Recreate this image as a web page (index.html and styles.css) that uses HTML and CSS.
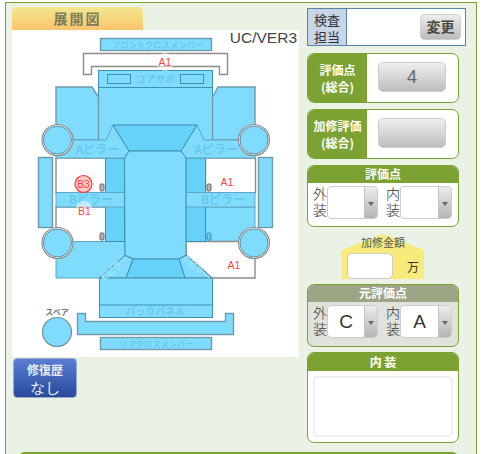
FILE: index.html
```html
<!DOCTYPE html>
<html>
<head>
  <meta charset="utf-8">
  <title>展開図</title>
  <link rel="stylesheet" href="styles.css">
</head>
<body>
  <div class="frame">
    <div class="columns">
      <div class="left">
        <div class="tab">展開図</div>
        <div class="diagram">
          <div class="version">UC/VER3</div>
          <svg class="car" width="287" height="327" viewBox="12 30 287 327">
            <!-- front -->
            <rect class="part edge" x="100.5" y="38.5" width="111" height="12"/>
            <polygon class="empty" points="83.5,53.5 227.5,53.5 227.5,74.5 219.5,74.5 219.5,66.5 91.5,66.5 91.5,74.5 83.5,74.5"/>
            <rect class="part" x="98.5" y="70.5" width="114" height="70"/>
            <line class="seam" x1="98.5" y1="87.5" x2="212.5" y2="87.5"/>
            <rect class="part" x="107.5" y="74.5" width="23" height="9"/>
            <rect class="part" x="180.5" y="74.5" width="23" height="9"/>

            <!-- fenders -->
            <polygon class="part edge" points="56,87 92,87 98.5,97 98.5,140 56,140"/>
            <polygon class="part edge" points="212.5,97 218,87 255,87 255,140 212.5,140"/>

            <!-- left side -->
            <rect class="empty" x="56" y="158" width="50" height="35"/>
            <rect class="empty" x="56" y="207" width="50" height="35"/>
            <polygon class="part flat" points="56,241.5 125,241.5 125,278 56,278"/>
            <rect class="dark" x="105.5" y="158" width="19" height="83.5"/>
            <polygon class="part flat" points="56,140 106,140 113,125 129,151 124.5,158 56,158"/>
            <rect class="part flat" x="56" y="192.5" width="68.5" height="14.5"/>

            <!-- right side -->
            <rect class="empty" x="205.5" y="158" width="50" height="35"/>
            <rect class="part flat" x="205.5" y="207" width="49.5" height="34.5"/>
            <polygon class="empty" points="186,241.5 255,241.5 255,278 212,278 186,255"/>
            <rect class="dark" x="186" y="158" width="19.5" height="83.5"/>
            <polygon class="part flat" points="255,140 204,140 197,125 181,151 186,158 255,158"/>
            <rect class="part flat" x="186" y="192.5" width="69" height="14.5"/>

            <!-- cabin -->
            <polygon class="dark" points="113,125 197,125 181,151 129,151"/>
            <polygon class="part" points="129,151 181,151 186,158 186,255 179,259 133,259 125,255 124.5,158"/>
            <polygon class="part" points="99,278 125,255.5 133,259 126,278"/>
            <polygon class="part" points="186,255.5 212,278 185,278 179,259"/>
            <polygon class="dark" points="133,259 179,259 185,278 126,278"/>

            <!-- rear -->
            <rect class="part" x="99.5" y="278" width="113" height="39.5"/>
            <line class="seam" x1="99.5" y1="305" x2="212.5" y2="305"/>
            <polygon class="part edge" points="77.5,313.5 85.5,313.5 85.5,321.5 225.5,321.5 225.5,313.5 233.5,313.5 233.5,334.5 77.5,334.5"/>
            <rect class="part edge" x="100.5" y="337.5" width="111" height="12"/>

            <!-- skirts and handles -->
            <rect class="part edge" x="38.5" y="157.5" width="14" height="70"/>
            <rect class="part edge" x="258.5" y="157.5" width="14" height="70"/>
            <rect class="handle" x="100" y="184" width="4" height="7" rx="1"/>
            <rect class="handle" x="100" y="233" width="4" height="7" rx="1"/>
            <rect class="handle" x="207" y="184" width="4" height="7" rx="1"/>
            <rect class="handle blue" x="207" y="233" width="4" height="7" rx="1"/>

            <!-- tyres -->
            <circle class="ring" cx="57.5" cy="140" r="15.5"/><circle class="tyre" cx="57.5" cy="140" r="14"/>
            <circle class="ring" cx="254" cy="140" r="15.5"/><circle class="tyre" cx="254" cy="140" r="14"/>
            <circle class="ring" cx="57.5" cy="243" r="15.5"/><circle class="tyre" cx="57.5" cy="243" r="14"/>
            <circle class="ring" cx="254" cy="243" r="15.5"/><circle class="tyre" cx="254" cy="243" r="14"/>
            <circle class="tyre spare" cx="57" cy="332" r="14.5"/>

            <!-- part names -->
            <text class="name tiny" x="157.5" y="47.5">フロントクロスメンバー</text>
            <text class="name mid" x="155.5" y="83">コアサポ</text>
            <text class="name" x="97.5" y="154">Aピラー</text>
            <text class="name" x="216" y="154">Aピラー</text>
            <text class="name" x="91" y="204">Bピラー</text>
            <text class="name" x="223" y="204">Bピラー</text>
            <text class="name pale" x="115" y="271" transform="rotate(-40 115 268)">Cピラー</text>
            <text class="name pale" x="197" y="271" transform="rotate(40 197 268)">Cピラー</text>
            <text class="name mid" x="155.5" y="315">バックパネル</text>
            <text class="name tiny" x="156.5" y="346.5">リアクロスメンバー</text>
            <text class="spare-name" x="57" y="315">スペア</text>

            <!-- damage marks -->
            <circle class="halo" cx="165" cy="62" r="9"/>
            <circle class="halo" cx="84" cy="209" r="8"/>
            <circle class="mark" cx="83.5" cy="184" r="8.5"/>
            <text class="code" x="165" y="66">A1</text>
            <text class="code" x="83.5" y="188">B3</text>
            <text class="code" x="84.5" y="215">B1</text>
            <text class="code" x="227" y="186">A1</text>
            <text class="code" x="234" y="269">A1</text>
          </svg>
        </div>
        <div class="repair">修復歴<span>なし</span></div>
      </div>

      <div class="right">
        <div class="inspector">
          <div class="inspector-label">検査<br>担当</div>
          <div class="inspector-body"><div class="change">変更</div></div>
        </div>

        <div class="score">
          <div class="score-label">評価点<br>(総合)</div>
          <div class="score-body"><div class="score-btn">4</div></div>
        </div>
        <div class="score second">
          <div class="score-label">加修評価<br>(総合)</div>
          <div class="score-body"><div class="score-btn"></div></div>
        </div>

        <div class="box third">
          <div class="box-head">評価点</div>
          <div class="selects">
            <div class="side">外装</div>
            <div class="sel"><div class="sel-val"></div><div class="sel-arrow"></div></div>
            <div class="side inner">内装</div>
            <div class="sel"><div class="sel-val"></div><div class="sel-arrow"></div></div>
          </div>
        </div>

        <div class="amount">
          <div class="amount-title">加修金額</div>
          <div class="amount-row"><div class="amount-input"></div><span>万</span></div>
        </div>

        <div class="box old">
          <div class="box-head">元評価点</div>
          <div class="selects">
            <div class="side">外装</div>
            <div class="sel"><div class="sel-val">C</div><div class="sel-arrow"></div></div>
            <div class="side inner">内装</div>
            <div class="sel"><div class="sel-val">A</div><div class="sel-arrow"></div></div>
          </div>
        </div>

        <div class="box interior">
          <div class="box-head">内 装</div>
          <div class="memo"></div>
        </div>
      </div>
    </div>
    <div class="bottom"></div>
  </div>
</body>
</html>
```

FILE: styles.css
```css
html, body {
  margin: 0;
  padding: 0;
  height: 454px;
  overflow: hidden;
  background: #fff;
  font-family: "Noto Sans CJK JP", "Liberation Sans", sans-serif;
  color: #333;
}

.frame {
  box-sizing: border-box;
  margin: 2px 0 0 5px;
  width: 472px;
  height: 452px;
  padding: 4px 0 0 6px;
  background: #e9f2e4;
  border: 1px solid #7ba232;
  border-bottom: none;
  overflow: hidden;
}

.columns {
  display: flex;
  align-items: flex-start;
  gap: 8px;
  height: 436px;
}

.left {
  width: 287px;
  flex: none;
}

.tab {
  box-sizing: border-box;
  width: 131px;
  height: 23px;
  border-radius: 5px 5px 0 0;
  background: linear-gradient(#f2e78e, #fbc56d);
  color: #7d7d5c;
  font-size: 14px;
  font-weight: 700;
  line-height: 23px;
  text-align: center;
  letter-spacing: 2px;
}

.diagram {
  position: relative;
  height: 327px;
  background: #fff;
}

.car {
  display: block;
}

.version {
  position: absolute;
  top: -2px;
  right: 2px;
  font-family: "Liberation Sans", sans-serif;
  font-size: 15.5px;
  line-height: 20px;
  color: #444;
}

.part {
  fill: #7fdcff;
  stroke: #3f8fae;
  stroke-width: 1;
}

.part.edge {
  stroke: #6e9aac;
  stroke-width: 1.4;
}

.part.flat {
  stroke: #5ea6c2;
}

.dark {
  fill: #66d2f9;
  stroke: #3f8fae;
  stroke-width: 1;
}

.empty {
  fill: #fff;
  stroke: #8c8c8c;
  stroke-width: 1.4;
}

.seam {
  stroke: #3f8fae;
  stroke-width: 1;
}

.handle {
  fill: #b5b5b5;
  stroke: #666;
  stroke-width: 1;
}

.handle.blue {
  fill: #66c8ec;
  stroke: #3f8fae;
}

.ring {
  fill: #fff;
  stroke: #8c8c8c;
  stroke-width: 1.2;
}

.tyre {
  fill: #7fdcff;
  stroke: #5f8ea0;
  stroke-width: 1;
}

.spare {
  stroke: #70909c;
  stroke-width: 1.2;
}

.name {
  fill: #6cc8ec;
  font-size: 12px;
  font-weight: 700;
  text-anchor: middle;
}

.name.mid {
  font-size: 10px;
}

.name.tiny {
  font-size: 8.3px;
}

.name.pale {
  fill: #a6e3f7;
  font-size: 9px;
}

.spare-name {
  fill: #777;
  font-size: 8px;
  font-weight: 700;
  text-anchor: middle;
}

.halo {
  fill: #fff;
  opacity: 0.55;
}

.mark {
  fill: #ffc9c9;
  stroke: #f33;
  stroke-width: 1.2;
}

.code {
  fill: #f44;
  font-family: "Liberation Sans", sans-serif;
  font-size: 10.5px;
  text-anchor: middle;
}

.repair {
  box-sizing: border-box;
  width: 64px;
  height: 40px;
  margin: 1px 0 0 1px;
  padding-top: 3px;
  border-radius: 4px;
  background: linear-gradient(#5a7fd2, #28499c);
  border: 1px solid #9aa9c4;
  color: #e4ecfa;
  font-size: 12px;
  font-weight: 700;
  line-height: 16px;
  text-align: center;
}

.repair span {
  display: block;
  font-size: 15px;
  font-weight: 400;
  line-height: 19px;
}

.right {
  width: 152px;
  flex: none;
  margin-top: 1px;
}

.inspector {
  box-sizing: border-box;
  display: flex;
  width: 159px;
  height: 38px;
  border: 1px solid #5d82a8;
  background: #fff;
}

.inspector-label {
  width: 38px;
  border-right: 1px solid #5d82a8;
  background: #c7d5e8;
  font-size: 13px;
  line-height: 17px;
  padding-top: 2px;
  text-align: center;
}

.inspector-body {
  flex: 1;
  display: flex;
  justify-content: flex-end;
  align-items: center;
  padding-right: 4px;
}

.change {
  width: 41px;
  height: 26px;
  border-radius: 5px;
  background: linear-gradient(#efefef, #b9b9b9);
  box-shadow: inset 0 0 0 1px #d0d0d0;
  color: #4a4a3c;
  font-size: 14px;
  font-weight: 700;
  line-height: 25px;
  text-align: center;
}

.score {
  box-sizing: border-box;
  display: flex;
  height: 50px;
  margin-top: 7px;
  background: #fff;
  border: 1px solid #7ba232;
  border-radius: 7px;
  overflow: hidden;
}

.score.second {
  margin-top: 6px;
}

.score-label {
  width: 59px;
  padding-top: 7px;
  background: #7ba232;
  color: #fff;
  font-size: 12px;
  font-weight: 700;
  line-height: 17px;
  text-align: center;
}

.score-body {
  flex: 1;
  padding: 8px 0 0 11px;
}

.score-btn {
  box-sizing: border-box;
  width: 68px;
  height: 30px;
  border: 1px solid #ccc;
  border-radius: 5px;
  background: linear-gradient(#efefef, #bdbdbd);
  color: #666;
  font-family: "Liberation Sans", sans-serif;
  font-size: 18px;
  line-height: 28px;
  text-align: center;
}

.box {
  box-sizing: border-box;
  background: #fff;
  border: 1px solid #7ba232;
  border-radius: 7px;
  overflow: hidden;
}

.box-head {
  height: 17px;
  background: #7ba232;
  color: #fff;
  font-size: 12px;
  font-weight: 700;
  line-height: 16px;
  text-align: center;
}

.box.third {
  height: 62px;
  margin-top: 6px;
}

.box.old {
  height: 63px;
  margin-top: 5px;
  background: #e0e3db;
}

.old .box-head {
  background: #9da587;
}

.selects {
  display: flex;
  align-items: flex-start;
  padding: 3px 0 0 5px;
}

.side {
  width: 14px;
  height: 33px;
  padding-top: 1px;
  box-sizing: border-box;
  writing-mode: vertical-rl;
  text-orientation: upright;
  font-size: 14px;
  font-weight: 300;
  line-height: 14px;
  letter-spacing: 2px;
}

.side.inner {
  margin-left: 8px;
}

.sel {
  box-sizing: border-box;
  display: flex;
  width: 51px;
  height: 33px;
  border: 1px solid #ccc;
  border-radius: 4px;
  overflow: hidden;
  background: #fff;
}

.inner + .sel {
  width: 52px;
}

.sel-val {
  flex: 1;
  color: #333;
  font-family: "Liberation Sans", sans-serif;
  font-size: 19px;
  line-height: 31px;
  text-align: center;
}

.sel-arrow {
  position: relative;
  width: 12px;
  background: linear-gradient(#ececec, #b4b4b4);
  border-left: 1px solid #c4c4c4;
}

.sel-arrow::after {
  content: "";
  position: absolute;
  left: 3px;
  top: 15px;
  border: 3px solid transparent;
  border-top: 4px solid #666;
  border-bottom: none;
}

.amount {
  position: relative;
  box-sizing: border-box;
  width: 82px;
  height: 45px;
  margin: 7px 0 0 35px;
}

/* yellow house shape sits behind the title, the title pokes out of it */
.amount::before {
  content: "";
  position: absolute;
  inset: 0;
  z-index: 0;
  background: #f9ea7c;
  clip-path: polygon(0 16px, 50% 0, 100% 16px, 100% 100%, 0 100%);
}

.amount-title, .amount-row {
  position: relative;
}

.amount-title {
  font-size: 11px;
  line-height: 16px;
  text-align: center;
  color: #555;
}

.amount-row {
  display: flex;
  align-items: center;
  padding: 3px 0 0 5px;
}

.amount-input {
  box-sizing: border-box;
  width: 46px;
  height: 26px;
  background: #fff;
  border: 1px solid #ccc;
  border-radius: 5px;
}

.amount-row span {
  margin-left: 14px;
  font-size: 12px;
}

.box.interior {
  height: 91px;
  margin-top: 5px;
}

.interior .box-head {
  height: 18px;
  line-height: 17px;
}

.memo {
  box-sizing: border-box;
  width: 140px;
  height: 61px;
  margin: 5px 0 0 5px;
  background: #fff;
  border: 2px solid #efefef;
  border-radius: 5px;
}

.bottom {
  width: 441px;
  height: 30px;
  margin: 9px 0 0 6px;
  background: #7ba232;
  border-radius: 7px 7px 0 0;
}
```
